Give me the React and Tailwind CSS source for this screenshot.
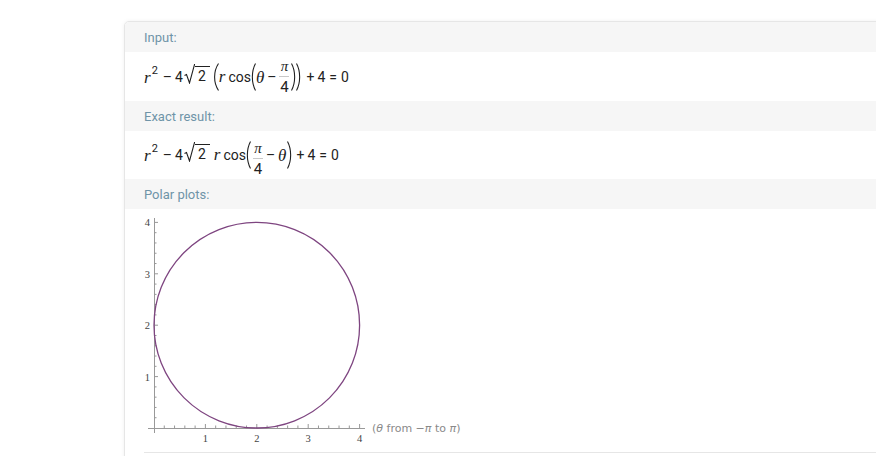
import React from "react";

const serif = { fontFamily: '"Liberation Serif", "DejaVu Serif", serif' };

function Paren({ h = 28, left = true, w = 6 }) {
  const d = left
    ? `M${w - 0.5},0.5 C${0.3},${h * 0.3} ${0.3},${h * 0.7} ${w - 0.5},${h - 0.5}`
    : `M0.5,0.5 C${w - 0.3},${h * 0.3} ${w - 0.3},${h * 0.7} 0.5,${h - 0.5}`;
  return (
    <svg width={w} height={h} viewBox={`0 0 ${w} ${h}`} className="shrink-0 block">
      <path d={d} fill="none" stroke="#222" strokeWidth="1.1" />
    </svg>
  );
}

function V({ children }) {
  return (
    <span className="italic text-[17px] leading-none" style={serif}>
      {children}
    </span>
  );
}

function Sqrt({ children }) {
  return (
    <span className="inline-flex items-end">
      <svg width="11" height="20" viewBox="0 0 11 20" className="shrink-0 mb-[-1px]">
        <path d="M0.5,11.5 L2.5,10.5 L5.5,19 L10.5,0.6 L11,0.6" fill="none" stroke="#222" strokeWidth="1.1" />
      </svg>
      <span className="border-t border-[#222] pt-[2px] pl-[3px] pr-[4px] leading-none">{children}</span>
    </span>
  );
}

function Frac({ num, den }) {
  return (
    <span className="inline-flex flex-col items-center -my-[6px]">
      <span className="italic text-[15px] leading-[17px]" style={serif}>{num}</span>
      <span className="w-[10px] h-px bg-[#c8c8c8] my-[1px]" />
      <span className="text-[15px] leading-[18px]">{den}</span>
    </span>
  );
}

function R2() {
  return (
    <span className="inline-flex items-start">
      <V>r</V>
      <span className="text-[11px] leading-none -mt-[4px] ml-[1px]">2</span>
    </span>
  );
}

function Header({ children }) {
  return (
    <div className="h-[30px] bg-[#f6f6f6] pl-[19px] flex items-center pt-[2px] text-[13px] text-[#6f94a8]" style={{ fontFamily: "Roboto, sans-serif" }}>
      {children}
    </div>
  );
}

function Plot() {
  const x0 = 10, y0 = 218, u = 51.4;
  const ticks = [];
  for (let i = 1; i <= 20; i++) {
    const v = i * 0.2;
    const major = i % 5 === 0;
    const len = major ? 4 : 2.5;
    const x = x0 + v * u;
    const y = y0 - v * u;
    ticks.push(<line key={"x" + i} x1={x} y1={y0} x2={x} y2={y0 - len} stroke="#999" strokeWidth="1" />);
    ticks.push(<line key={"y" + i} x1={x0} y1={y} x2={x0 + len} y2={y} stroke="#999" strokeWidth="1" />);
  }
  return (
    <svg width="340" height="234" viewBox="0 0 340 234" className="block">
      <line x1="4" y1={y0 + 0.5} x2="221" y2={y0 + 0.5} stroke="#999" strokeWidth="1" />
      <line x1={x0 + 0.5} y1="8" x2={x0 + 0.5} y2="223" stroke="#999" strokeWidth="1" />
      {ticks}
      {[1, 2, 3, 4].map((k) => (
        <text key={"lx" + k} x={x0 + k * u} y={y0 + 14} textAnchor="middle" fontSize="10.5" fill="#444" style={serif}>
          {k}
        </text>
      ))}
      {[1, 2, 3, 4].map((k) => (
        <text key={"ly" + k} x={6} y={y0 - k * u + 4} textAnchor="end" fontSize="10.5" fill="#444" style={serif}>
          {k}
        </text>
      ))}
      <circle cx={x0 + 2 * u} cy={y0 - 2 * u} r={2 * u} fill="none" stroke="#7e4580" strokeWidth="1.3" />
      <text x="228" y={y0 + 4} fontSize="11" fill="#8a8a8a" style={{ fontFamily: '"DejaVu Sans", sans-serif' }}>
        (<tspan fontStyle="italic">θ</tspan> from −<tspan fontStyle="italic">π</tspan> to <tspan fontStyle="italic">π</tspan>)
      </text>
    </svg>
  );
}

export default function App() {
  return (
    <div className="w-[876px] h-[456px] overflow-hidden bg-white" style={{ fontFamily: "Roboto, sans-serif" }}>
      <div className="ml-[124px] mt-[21px] w-[790px] border border-[#e6e6e6] rounded-[5px] shadow-[0_0_4px_rgba(0,0,0,0.06)] bg-white overflow-hidden">
        <Header>Input:</Header>
        <div className="h-[49px] pl-[19px] flex items-center text-[14px] text-[#222] pt-[1px]">
          <R2 />
          <span className="ml-[5px] mr-[3px]">–</span>
          <span>4</span>
          <span className="ml-[1px]"><Sqrt>2</Sqrt></span>
          <span className="ml-[3px]"><Paren h={28} /></span>
          <span className="mr-[3px]"><V>r</V></span>
          <span>cos</span>
          <Paren h={28} w={5} />
          <V>θ</V>
          <span className="mx-[3px]">–</span>
          <Frac num="π" den="4" />
          <span className="ml-[2px]"><Paren h={28} w={5} left={false} /></span>
          <Paren h={28} w={5} left={false} />
          <span className="ml-[5px] mr-[3px]">+</span>
          <span>4</span>
          <span className="mx-[4px]">=</span>
          <span>0</span>
        </div>
        <Header>Exact result:</Header>
        <div className="h-[48px] pl-[19px] flex items-center text-[14px] text-[#222]">
          <R2 />
          <span className="ml-[5px] mr-[3px]">–</span>
          <span>4</span>
          <span className="ml-[1px]"><Sqrt>2</Sqrt></span>
          <span className="ml-[4px] mr-[3px]"><V>r</V></span>
          <span>cos</span>
          <Paren h={28} w={5} />
          <span className="ml-[2px]"><Frac num="π" den="4" /></span>
          <span className="mx-[3px]">–</span>
          <V>θ</V>
          <span className="ml-[1px]"><Paren h={28} w={5} left={false} /></span>
          <span className="ml-[4px] mr-[3px]">+</span>
          <span>4</span>
          <span className="mx-[4px]">=</span>
          <span>0</span>
        </div>
        <Header>Polar plots:</Header>
        <div className="mx-[19px] pt-[1px] pb-[8px] border-b border-[#e6e6e6]">
          <Plot />
        </div>
        <div className="h-[20px]" />
      </div>
    </div>
  );
}
